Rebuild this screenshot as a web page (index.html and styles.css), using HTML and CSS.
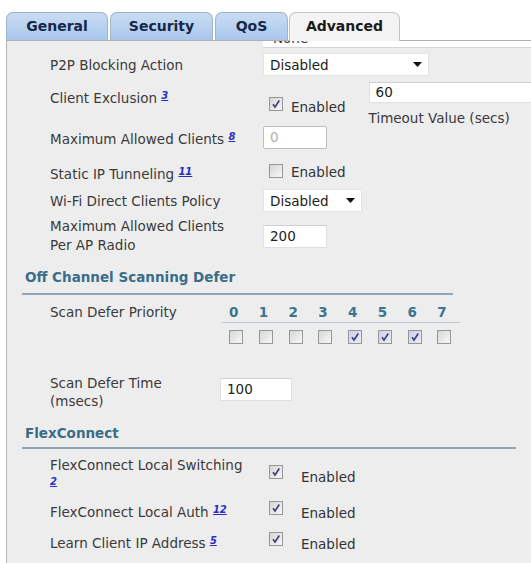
FILE: index.html
```html
<!DOCTYPE html>
<html>
<head>
<meta charset="utf-8">
<link rel="stylesheet" href="styles.css">
</head>
<body>
<div class="tabs">
  <div class="tab t-general">General</div>
  <div class="tab t-security">Security</div>
  <div class="tab t-qos">QoS</div>
  <div class="tab t-adv active">Advanced</div>
</div>
<div class="panel">
  <div class="strip"><span>None</span></div>

  <div class="row r-p2p">
    <div class="label">P2P Blocking Action</div>
    <div class="select sel-p2p"><span>Disabled</span><svg class="arrow" width="9" height="5" viewBox="0 0 9 5"><path d="M0 0H9L4.5 5Z" fill="#111"/></svg></div>
  </div>

  <div class="row r-client">
    <div class="label lab-client">Client Exclusion <a class="sup">3</a></div>
    <div class="val">
      <div class="cbgroup cb-client"><span class="cb checked"><svg viewBox="0 0 12 12"><path d="M3 6.2L5 9L9.3 2.5" fill="none" stroke="#3d3d86" stroke-width="1.6"/></svg></span><span class="cbtext">Enabled</span></div>
      <div class="timeout">
        <div class="input in-60">60</div>
        <div class="caption">Timeout Value (secs)</div>
      </div>
    </div>
  </div>

  <div class="row r-max">
    <div class="label">Maximum Allowed Clients <a class="sup">8</a></div>
    <div class="input in-max disabled">0</div>
  </div>

  <div class="row r-static">
    <div class="label">Static IP Tunneling <a class="sup">11</a></div>
    <div class="cbgroup"><span class="cb"></span><span class="cbtext">Enabled</span></div>
  </div>

  <div class="row r-wifi">
    <div class="label">Wi-Fi Direct Clients Policy</div>
    <div class="select sel-wifi"><span>Disabled</span><svg class="arrow" width="9" height="5" viewBox="0 0 9 5"><path d="M0 0H9L4.5 5Z" fill="#111"/></svg></div>
  </div>

  <div class="row r-ap">
    <div class="label two">Maximum Allowed Clients<br>Per AP Radio</div>
    <div class="input in-ap">200</div>
  </div>

  <div class="heading h-off">Off Channel Scanning Defer</div>

  <div class="row r-prio">
    <div class="label lab-prio">Scan Defer Priority</div>
    <div class="prio">
      <div class="prio-nums">
        <span>0</span><span>1</span><span>2</span><span>3</span><span>4</span><span>5</span><span>6</span><span>7</span>
      </div>
      <div class="prio-boxes">
        <span><i class="cb"></i></span>
        <span><i class="cb"></i></span>
        <span><i class="cb"></i></span>
        <span><i class="cb"></i></span>
        <span><i class="cb checked blue"><svg viewBox="0 0 12 12"><path d="M3 6.2L5 9L9.3 2.5" fill="none" stroke="#3d3d86" stroke-width="1.6"/></svg></i></span>
        <span><i class="cb checked blue"><svg viewBox="0 0 12 12"><path d="M3 6.2L5 9L9.3 2.5" fill="none" stroke="#3d3d86" stroke-width="1.6"/></svg></i></span>
        <span><i class="cb checked blue"><svg viewBox="0 0 12 12"><path d="M3 6.2L5 9L9.3 2.5" fill="none" stroke="#3d3d86" stroke-width="1.6"/></svg></i></span>
        <span><i class="cb"></i></span>
      </div>
    </div>
  </div>

  <div class="row r-time">
    <div class="label lab-time">Scan Defer Time<br>(msecs)</div>
    <div class="input in-time">100</div>
  </div>

  <div class="heading h-flex">FlexConnect</div>

  <div class="row r-switch">
    <div class="label lab-flex">FlexConnect Local Switching<br><a class="sup low">2</a></div>
    <div class="cbgroup wide"><span class="cb checked"><svg viewBox="0 0 12 12"><path d="M3 6.2L5 9L9.3 2.5" fill="none" stroke="#3d3d86" stroke-width="1.6"/></svg></span><span class="cbtext">Enabled</span></div>
  </div>

  <div class="row r-auth">
    <div class="label lab-flex1">FlexConnect Local Auth <a class="sup">12</a></div>
    <div class="cbgroup wide"><span class="cb checked"><svg viewBox="0 0 12 12"><path d="M3 6.2L5 9L9.3 2.5" fill="none" stroke="#3d3d86" stroke-width="1.6"/></svg></span><span class="cbtext">Enabled</span></div>
  </div>

  <div class="row r-learn">
    <div class="label lab-flex1">Learn Client IP Address <a class="sup">5</a></div>
    <div class="cbgroup wide"><span class="cb checked"><svg viewBox="0 0 12 12"><path d="M3 6.2L5 9L9.3 2.5" fill="none" stroke="#3d3d86" stroke-width="1.6"/></svg></span><span class="cbtext">Enabled</span></div>
  </div>
</div>
</body>
</html>
```
FILE: styles.css
```css
html, body {
  margin: 0;
  padding: 0;
  background: #ffffff;
  height: 563px;
  overflow: hidden;
}
body {
  font-family: "DejaVu Sans", Verdana, sans-serif;
  font-size: 13.5px;
  color: #3a3a3a;
}
.tabs {
  display: flex;
  align-items: flex-end;
  padding: 12px 0 0 6px;
  height: 28px;
  position: relative;
  z-index: 2;
}
.tab {
  box-sizing: border-box;
  height: 28px;
  border: 1px solid #9fb3cb;
  border-bottom: none;
  border-radius: 7px 7px 0 0;
  background: linear-gradient(#c9dcf3, #a9c7ec);
  font-weight: bold;
  font-size: 14px;
  color: #16284a;
  text-align: center;
  line-height: 27px;
}
.t-general { width: 102px; margin-right: 2px; }
.t-security { width: 103px; margin-right: 2px; }
.t-qos { width: 73px; margin-right: 1px; }
.t-adv { width: 111px; }
.tab.active {
  background: #f3f3f3;
  border-color: #c2c2c2;
  color: #1a1a1a;
  height: 29px;
  margin-bottom: -1px;
}
.panel {
  margin-left: 6px;
  border-left: 1px solid #b4b4b4;
  border-top: 1px solid #b0b0b0;
  background: #ededed;
  height: 522px;
  overflow: hidden;
}
.strip {
  margin-left: 256px;
  height: 6px;
  overflow: hidden;
  background: #fff;
  border-bottom: 1px solid #d4d4d4;
}
.strip span {
  display: block;
  margin-top: -11px;
  padding-left: 10px;
  line-height: 16px;
}
.row {
  display: flex;
  padding-left: 43px;
}
.label {
  width: 213px;
  flex: none;
  line-height: 16px;
}
.sup {
  font-size: 10px;
  font-weight: bold;
  font-style: italic;
  text-decoration: underline;
  color: #2c2cc4;
  vertical-align: 4px;
}
.sup.low { vertical-align: 0; }
.select {
  box-sizing: border-box;
  height: 23px;
  background: #fff;
  border: 1px solid #e4e4e4;
  display: flex;
  align-items: center;
  justify-content: space-between;
  padding: 0 6px 0 6px;
  color: #222;
}
.sel-p2p { width: 166px; }
.sel-wifi { width: 99px; }
.input {
  box-sizing: border-box;
  background: #fff;
  border: 1px solid #e0e0e0;
  border-top-color: #cfcfcf;
  padding-left: 6px;
  color: #222;
}
.input.disabled {
  border: 1px solid #bdbdbd;
  border-radius: 2px;
  color: #b0b0b0;
}
.cb {
  display: inline-block;
  box-sizing: border-box;
  width: 14px;
  height: 14px;
  border: 1px solid #979797;
  background: linear-gradient(135deg, #d6d6d6, #f7f7f7);
  flex: none;
}
.cb svg { display: block; width: 12px; height: 12px; }
.cb.blue { background: linear-gradient(135deg, #cfcfe6, #ececf6); }
.cbgroup {
  display: flex;
  align-items: flex-start;
  margin-left: 6px;
}
.cbtext {
  margin-left: 8px;
  margin-top: 1px;
  line-height: 16px;
  color: #333;
}
.cbgroup.wide .cbtext { margin-left: 18px; margin-top: 4px; }

/* rows */
.r-p2p { margin-top: 5px; align-items: center; }
.r-client { margin-top: 6px; }
.lab-client { padding-top: 6px; }
.r-client .val { display: flex; }
.cb-client { margin-top: 15px; }
.cb-client .cbtext { margin-top: 2px; }
.timeout { margin-left: 23px; }
.in-60 { width: 170px; height: 21px; line-height: 19px; }
.caption { margin-top: 7px; line-height: 16px; }
.r-max { margin-top: 0; align-items: center; }
.in-max { width: 64px; height: 23px; line-height: 21px; }
.r-static { margin-top: 15px; }
.r-static .cbtext { margin-top: 0; }
.r-wifi { margin-top: 7px; align-items: center; }
.r-ap { margin-top: 5px; align-items: center; }
.label.two { line-height: 19px; }
.in-ap { width: 64px; height: 23px; line-height: 21px; }

.heading {
  margin-left: 15px;
  padding-left: 3px;
  font-weight: bold;
  color: #3a6d88;
  line-height: 16px;
  border-bottom: 2px solid #90a6b6;
}
.h-off { margin-top: 14px; width: 428px; padding-bottom: 8px; }
.h-flex { margin-top: 15px; width: 491px; padding-bottom: 6px; }

.r-prio { margin-top: 0; }
.lab-prio { width: 172px; margin-top: 9px; }
.prio { width: 238px; margin-top: 9px; }
.prio-nums {
  display: grid;
  grid-template-columns: repeat(8, 1fr);
  border-bottom: 1px solid #b8c4cc;
  padding-bottom: 2px;
  font-weight: bold;
  color: #3a7590;
  line-height: 16px;
}
.prio-nums span { padding-left: 7px; }
.prio-boxes {
  display: grid;
  grid-template-columns: repeat(8, 1fr);
  margin-top: 7px;
}
.prio-boxes span { padding-left: 7px; display: flex; }
.r-time { margin-top: 30px; }
.lab-time { width: 170px; line-height: 18px; }
.in-time { width: 72px; height: 23px; line-height: 21px; margin-top: 4px; }

.r-switch { margin-top: 9px; }
.lab-flex { line-height: 15px; }
.r-switch .cbgroup { margin-top: 7px; }
.r-auth { margin-top: 12px; }
.lab-flex1 { margin-top: 1px; line-height: 16px; }
.r-learn { margin-top: 11px; }
.r-learn .cbtext { margin-top: 3px; }
```
